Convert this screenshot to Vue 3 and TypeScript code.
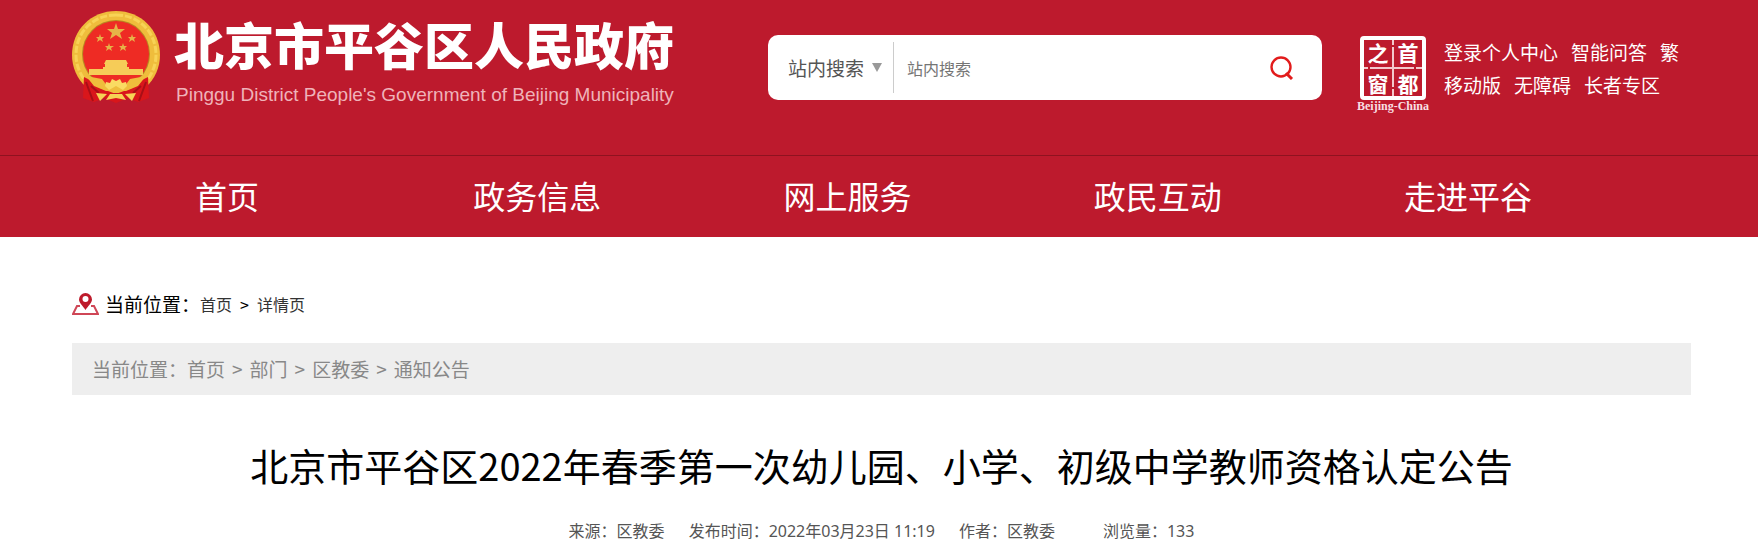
<script setup lang="ts">
import { ref } from 'vue'

const scope = ref('site')
const keyword = ref('')

const toolRows: string[][] = [
  ['登录个人中心', '智能问答', '繁'],
  ['移动版', '无障碍', '长者专区'],
]
const navItems: string[] = ['首页', '政务信息', '网上服务', '政民互动', '走进平谷']
const trail: string[] = ['首页', '部门', '区教委', '通知公告']
</script>

<template>
  <div class="page">
    <header class="header">
      <div class="masthead">
        <a class="brand" href="#">
          <svg class="emblem" viewBox="0 0 88 94" aria-hidden="true">
            <path d="M44 1 C19 1 0 20 0 45 C0 57 5 69 14 77 L26 83 H62 L74 77 C83 69 88 57 88 45 C88 20 69 1 44 1Z" fill="#efbd3c" />
            <path d="M44 5 C21 5 4 22 4 45 C4 56 9 66 15 73 M44 5 C67 5 84 22 84 45 C84 56 79 66 73 73" fill="none" stroke="#f8d356" stroke-width="3" stroke-dasharray="7 2" />
            <circle cx="44" cy="44" r="34" fill="#b88722" />
            <circle cx="44" cy="44" r="33" fill="#ee2b24" />
            <g fill="#e6b348">
              <path d="M44 13 L46 19 L53 19 L48 23 L50 29 L44 25 L38 29 L40 23 L35 19 L42 19Z" />
              <path d="M28 24 L29 27 L32 27 L30 29 L31 32 L28 30 L25 32 L26 29 L24 27 L27 27Z" />
              <path d="M60 24 L61 27 L64 27 L62 29 L63 32 L60 30 L57 32 L58 29 L56 27 L59 27Z" />
              <path d="M37 33 L38 36 L42 36 L39 38 L40 41 L37 39 L34 41 L35 38 L33 36 L36 36Z" />
              <path d="M51 33 L52 36 L55 36 L53 38 L54 41 L51 39 L48 41 L49 38 L47 36 L50 36Z" />
            </g>
            <path d="M34 50 H54 L56 54 H32Z M33 54 H55 V57 H57 V59 H31 V57 H33Z M17 59 H71 V65 H17Z" fill="#f6cc58" />
            <path d="M12 67 L20 71 L28 78 L44 84 L60 78 L68 71 L76 67 L77 88 L66 92 L56 88 L44 93 L32 88 L22 92 L11 88Z" fill="#d9161b" />
            <path d="M14 72 L21 91 M74 72 L67 91 M19 76 L27 83 M69 76 L61 83" fill="none" stroke="#a80f17" stroke-width="2" />
            <path d="M14 66 L30 69 L36 77 L44 73 L52 77 L58 69 L74 66 L66 76 L54 81 H34 L22 76Z" fill="#efbd3c" />
            <path d="M33 76 L34 72 L38 73 L40 69 L44 71 L48 69 L50 73 L54 72 L55 76 L51 80 L44 76 L37 80Z" fill="#fadb62" />
            <path d="M24 83 L35 84 L28 91Z M64 83 L53 84 L60 91Z M38 84 H50 L54 90 L44 88 L34 90Z" fill="#f6d255" />
          </svg>
          <span class="brand-text">
            <strong class="brand-name">北京市平谷区人民政府</strong>
            <span class="brand-en">Pinggu District People's Government of Beijing Municipality</span>
          </span>
        </a>

        <form class="search" role="search" @submit.prevent>
          <select v-model="scope" class="scope" aria-label="搜索范围">
            <option value="site">站内搜索</option>
          </select>
          <svg class="arrow" viewBox="0 0 10 9" aria-hidden="true"><path d="M0 0H10L5 9Z" fill="#999" /></svg>
          <input v-model="keyword" class="keyword" type="text" placeholder="站内搜索" aria-label="站内搜索" />
          <button class="go" type="submit" aria-label="搜索">
            <svg viewBox="0 0 24 24" aria-hidden="true">
              <circle cx="11" cy="11" r="9.5" fill="none" stroke="#e21c1c" stroke-width="2.4" />
              <path d="M16 17 L22 23" stroke="#e21c1c" stroke-width="3" />
            </svg>
          </button>
        </form>

        <a class="capital" href="#" aria-label="首都之窗">
          <svg viewBox="0 0 76 78">
            <rect x="6" y="3" width="62" height="60" rx="2" fill="none" stroke="#fff" stroke-width="4" />
            <path d="M37 5V10M37 12V52M37 54V61M8 33H12M14 33H58M60 33H66" stroke="#f3c8cc" stroke-width="2" />
            <g class="seal" fill="#fff" text-anchor="middle">
              <text x="22" y="26">之</text>
              <text x="52" y="26">首</text>
              <text x="22" y="57">窗</text>
              <text x="52" y="57">都</text>
            </g>
            <text class="seal-en" x="37" y="75" fill="#f9dfe2" text-anchor="middle">Beijing-China</text>
          </svg>
        </a>

        <div class="tools">
          <div v-for="(row, i) in toolRows" :key="i" class="tool-row">
            <a v-for="item in row" :key="item" href="#">{{ item }}</a>
          </div>
        </div>
      </div>

      <nav class="nav">
        <a v-for="item in navItems" :key="item" href="#">{{ item }}</a>
      </nav>
    </header>

    <main class="main">
      <div class="location">
        <svg class="pin" viewBox="0 0 27 22" aria-hidden="true">
          <path d="M8 13H5L1 21H26L22 13H19" fill="none" stroke="#cf4656" stroke-width="2" />
          <path d="M13.500 17 C11 13 7 10 7 6.500 A6.500 6.500 0 0 1 20 6.500 C20 10 16 13 13.500 17Z" fill="#be1b2c" />
          <circle cx="13.500" cy="6" r="3" fill="#fff" />
        </svg>
        <span>当前位置：</span>
        <a href="#">首页</a>
        <span class="sep">&gt;</span>
        <a href="#">详情页</a>
      </div>

      <div class="trail">
        <span>当前位置：</span>
        <template v-for="(item, i) in trail" :key="item">
          <span v-if="i > 0" class="trail-sep">&gt;</span>
          <a href="#">{{ item }}</a>
        </template>
      </div>

      <article>
        <h1 class="title">北京市平谷区2022年春季第一次幼儿园、小学、初级中学教师资格认定公告</h1>
        <div class="meta">
          <span>来源：区教委</span>
          <span>发布时间：2022年03月23日 11:19</span>
          <span>作者：区教委</span>
          <span class="views">浏览量：133</span>
        </div>
      </article>
    </main>
  </div>
</template>

<style>
body {
  margin: 0;
  background: #fff;
}
</style>

<style scoped>
.page {
  font-family: "Noto Sans CJK SC", sans-serif;
  font-size: 19px;
  color: #000;
}
a {
  color: inherit;
  text-decoration: none;
}
.header {
  background: #bd1a2d;
  color: #fff;
}
.masthead {
  display: flex;
  align-items: flex-start;
  padding: 0 67px 42px 72px;
}
.brand {
  display: flex;
  flex: 1;
  gap: 14px;
  padding-top: 10px;
}
.emblem {
  width: 88px;
  height: 94px;
  flex: none;
}
.brand-text {
  display: flex;
  flex-direction: column;
  white-space: nowrap;
}
.brand-name {
  font-size: 50px;
  line-height: 66px;
  font-weight: 900;
}
.brand-en {
  padding-left: 2px;
  font-family: "Liberation Sans", Arial, sans-serif;
  font-size: 19px;
  line-height: 37px;
  color: #efb3ba;
}
.search {
  display: flex;
  align-items: center;
  width: 554px;
  height: 65px;
  margin: 35px 34px 0 0;
  padding: 0 28px 0 20px;
  box-sizing: border-box;
  background: #fff;
  border-radius: 10px;
}
.scope {
  appearance: none;
  padding: 0;
  border: 0;
  background: none;
  font-family: inherit;
  font-size: 19px;
  color: #555;
}
.arrow {
  width: 10px;
  height: 9px;
  margin: 0 11px 0 7px;
  flex: none;
}
.keyword {
  flex: 1;
  min-width: 0;
  height: 51px;
  padding: 0 13px;
  box-sizing: border-box;
  border: 0;
  border-left: 1px solid #ccc;
  outline: 0;
  font-family: inherit;
  font-size: 16px;
}
.keyword::placeholder {
  color: #757575;
}
.go {
  display: flex;
  padding: 0;
  border: 0;
  background: none;
}
.go svg {
  width: 24px;
  height: 24px;
}
.capital {
  display: flex;
  margin: 35px 12px 0 0;
}
.capital svg {
  width: 76px;
  height: 78px;
}
.seal {
  font-size: 21px;
  font-weight: 700;
}
.seal-en {
  font-family: "Liberation Serif", serif;
  font-size: 12px;
  font-weight: 700;
}
.tools {
  width: 247px;
  margin-top: 35px;
  white-space: nowrap;
}
.tool-row {
  display: flex;
  gap: 13px;
  line-height: 33px;
}
.nav {
  display: grid;
  grid-template-columns: repeat(5, 1fr);
  padding: 0 135px 2px 72px;
  border-top: 1px solid #8f1220;
  font-size: 32px;
  line-height: 79px;
  text-align: center;
}
.main {
  padding: 53px 67px 0 72px;
}
.location {
  display: flex;
  align-items: center;
  line-height: 28px;
}
.pin {
  width: 27px;
  height: 22px;
  margin-right: 6px;
}
.location a {
  font-size: 16px;
  color: #333;
}
.sep {
  margin: 0 8px;
  font-size: 16px;
}
.trail {
  display: flex;
  margin-top: 25px;
  padding: 0 20px;
  background: #eee;
  color: #888;
  line-height: 52px;
}
.trail-sep {
  margin: 0 7px;
}
.title {
  margin: 42px 0 0;
  font-size: 38px;
  font-weight: 400;
  line-height: 56px;
  text-align: center;
}
.meta {
  display: flex;
  justify-content: center;
  gap: 24px;
  margin-top: 26px;
  font-family: "Noto Sans", "Noto Sans CJK SC", sans-serif;
  font-size: 16px;
  line-height: 24px;
  color: #555;
}
.views {
  margin-left: 24px;
}
</style>
